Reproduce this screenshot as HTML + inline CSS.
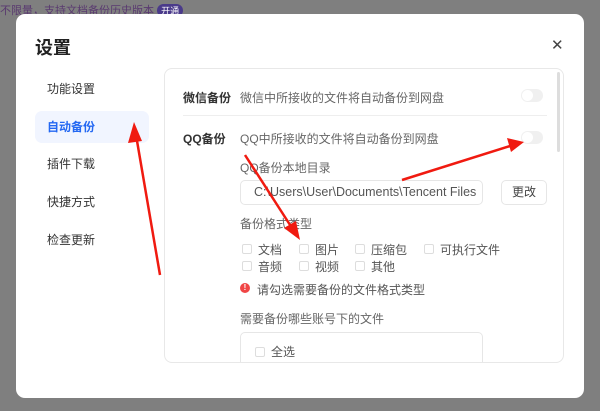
<!DOCTYPE html>
<html><head><meta charset="utf-8"><style>
*{margin:0;padding:0;box-sizing:border-box}
body{width:600px;height:411px;background:#7f7f7f;font-family:"Liberation Sans","Noto Sans CJK SC",sans-serif;position:relative;overflow:hidden;color:#333}
.top{position:absolute;left:0;top:2px;font-size:11px;color:#5a3a70;white-space:nowrap}
.top b{display:inline-block;background:#4a3a8a;color:#fff;border-radius:7px;padding:0 4px;font-weight:normal;font-size:9px}
.dlg{position:absolute;left:16px;top:14px;width:568px;height:384px;background:#fff;border-radius:9px}
.title{position:absolute;left:19px;top:20px;font-size:18px;font-weight:bold;color:#222}
.close{position:absolute;left:535px;top:22px;font-size:15px;color:#444}
.nav{position:absolute;left:19px;width:114px;height:32px;line-height:32px;padding-left:12px;font-size:12px;color:#333;border-radius:7px}
.nav.a{background:#f1f5ff;color:#2468f2;font-weight:bold}
.panel{position:absolute;left:148px;top:54px;width:400px;height:295px;border:1px solid #e8e8e8;border-radius:8px;overflow:hidden}
.sb{position:absolute;right:3px;top:3px;width:3px;height:80px;background:#ddd;border-radius:2px}
.t{position:absolute;font-size:12px;color:#666;white-space:nowrap}
.lb{position:absolute;font-size:12px;color:#333;font-weight:bold}
.tg{position:absolute;width:22px;height:13px;border-radius:7px;background:#f0f0f0}
.tg:after{content:"";position:absolute;left:1px;top:1px;width:11px;height:11px;border-radius:50%;background:#fff}
.cb{position:absolute;width:10px;height:10px;border:1px solid #ddd;border-radius:2px}
</style></head><body>
<div class="top">不限量，支持文档备份历史版本 <b>开通</b></div>
<div class="dlg">
<div class="title">设置</div>
<div class="close">✕</div>
<div class="nav" style="top:59px">功能设置</div>
<div class="nav a" style="top:97px">自动备份</div>
<div class="nav" style="top:134px">插件下载</div>
<div class="nav" style="top:172px">快捷方式</div>
<div class="nav" style="top:210px">检查更新</div>
<div class="panel">
<div class="sb"></div>
<div class="lb" style="left:18px;top:20px">微信备份</div>
<div class="t" style="left:75px;top:20px">微信中所接收的文件将自动备份到网盘</div>
<div class="tg" style="left:356px;top:20px"></div>
<div style="position:absolute;left:18px;top:46px;width:364px;height:1px;background:#eee"></div>
<div class="lb" style="left:18px;top:61px">QQ备份</div>
<div class="t" style="left:75px;top:61px">QQ中所接收的文件将自动备份到网盘</div>
<div class="tg" style="left:356px;top:62px"></div>
<div class="t" style="left:75px;top:90px">QQ备份本地目录</div>
<div style="position:absolute;left:75px;top:111px;width:243px;height:25px;border:1px solid #e6e6e6;border-radius:5px;font-size:12.5px;color:#555;padding:4px 0 0 13px;white-space:nowrap">C:\Users\User\Documents\Tencent Files</div>
<div style="position:absolute;left:336px;top:111px;width:46px;height:25px;border:1px solid #e6e6e6;border-radius:5px;font-size:12px;color:#444;text-align:center;line-height:23px">更改</div>
<div class="t" style="left:75px;top:146px">备份格式类型</div>
<div class="cb" style="left:77px;top:175px"></div><div class="t" style="left:93px;top:172px;color:#555">文档</div>
<div class="cb" style="left:134px;top:175px"></div><div class="t" style="left:150px;top:172px;color:#555">图片</div>
<div class="cb" style="left:190px;top:175px"></div><div class="t" style="left:206px;top:172px;color:#555">压缩包</div>
<div class="cb" style="left:259px;top:175px"></div><div class="t" style="left:275px;top:172px;color:#555">可执行文件</div>
<div class="cb" style="left:77px;top:192px"></div><div class="t" style="left:93px;top:189px;color:#555">音频</div>
<div class="cb" style="left:134px;top:192px"></div><div class="t" style="left:150px;top:189px;color:#555">视频</div>
<div class="cb" style="left:190px;top:192px"></div><div class="t" style="left:206px;top:189px;color:#555">其他</div>
<div style="position:absolute;left:75px;top:214px;width:10px;height:10px;border-radius:50%;background:#f04545;color:#fff;font-size:8px;text-align:center;line-height:10px;font-weight:bold">!</div>
<div class="t" style="left:92px;top:212px;color:#555">请勾选需要备份的文件格式类型</div>
<div class="t" style="left:75px;top:241px">需要备份哪些账号下的文件</div>
<div style="position:absolute;left:75px;top:263px;width:243px;height:40px;border:1px solid #e6e6e6;border-radius:5px"></div>
<div class="cb" style="left:90px;top:278px"></div><div class="t" style="left:106px;top:274px;color:#555">全选</div>
</div>
</div>
<svg width="600" height="411" style="position:absolute;left:0;top:0">
<g fill="#f01a10" stroke="#f01a10">
<line x1="160" y1="275" x2="136" y2="135" stroke-width="2.5"/>
<polygon points="134,122 128,143 142,141" stroke="none"/>
<line x1="245" y1="155" x2="292" y2="228" stroke-width="2.5"/>
<polygon points="300,240 284,228 296,221" stroke="none"/>
<line x1="402" y1="180" x2="510" y2="146" stroke-width="2.5"/>
<polygon points="524,142 507,138 511,152" stroke="none"/>
</g></svg>
</body></html>
